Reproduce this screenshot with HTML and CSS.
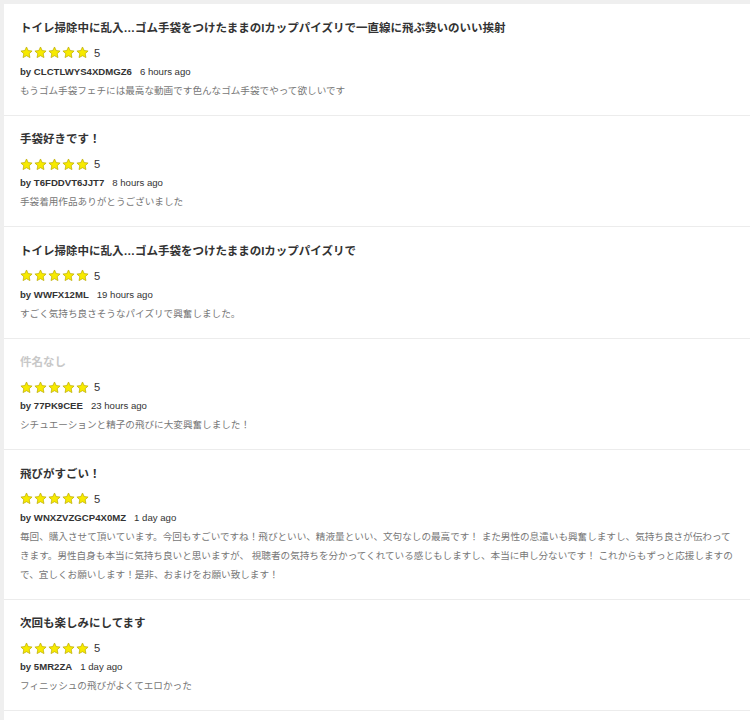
FILE: index.html
```html
<!DOCTYPE html>
<html lang="ja">
<head>
<meta charset="utf-8">
<link rel="stylesheet" href="styles.css">
</head>
<body>
<svg width="0" height="0" class="defs">
  <defs>
    <symbol id="star" viewBox="0 0 24 24">
      <path d="M12 1.8l3.1 6.6 7.2.9-5.3 5 1.4 7.1L12 17.9l-6.4 3.5 1.4-7.1-5.3-5 7.2-.9z" fill="#f7ea00" stroke="#b9a900" stroke-width="1.3" stroke-linejoin="round"/>
    </symbol>
  </defs>
</svg>
<div class="panel">
  <div class="review">
    <div class="title">トイレ掃除中に乱入…ゴム手袋をつけたままのIカップパイズリで一直線に飛ぶ勢いのいい挨射</div>
    <div class="rating"><span class="stars"><svg><use href="#star"/></svg><svg><use href="#star"/></svg><svg><use href="#star"/></svg><svg><use href="#star"/></svg><svg><use href="#star"/></svg></span><span class="score">5</span></div>
    <div class="meta"><span class="user">by CLCTLWYS4XDMGZ6</span><span class="time">6 hours ago</span></div>
    <div class="comment">もうゴム手袋フェチには最高な動画です色んなゴム手袋でやって欲しいです</div>
  </div>
  <div class="review">
    <div class="title">手袋好きです！</div>
    <div class="rating"><span class="stars"><svg><use href="#star"/></svg><svg><use href="#star"/></svg><svg><use href="#star"/></svg><svg><use href="#star"/></svg><svg><use href="#star"/></svg></span><span class="score">5</span></div>
    <div class="meta"><span class="user">by T6FDDVT6JJT7</span><span class="time">8 hours ago</span></div>
    <div class="comment">手袋着用作品ありがとうございました</div>
  </div>
  <div class="review">
    <div class="title">トイレ掃除中に乱入…ゴム手袋をつけたままのIカップパイズリで</div>
    <div class="rating"><span class="stars"><svg><use href="#star"/></svg><svg><use href="#star"/></svg><svg><use href="#star"/></svg><svg><use href="#star"/></svg><svg><use href="#star"/></svg></span><span class="score">5</span></div>
    <div class="meta"><span class="user">by WWFX12ML</span><span class="time">19 hours ago</span></div>
    <div class="comment">すごく気持ち良さそうなパイズリで興奮しました。</div>
  </div>
  <div class="review">
    <div class="title untitled">件名なし</div>
    <div class="rating"><span class="stars"><svg><use href="#star"/></svg><svg><use href="#star"/></svg><svg><use href="#star"/></svg><svg><use href="#star"/></svg><svg><use href="#star"/></svg></span><span class="score">5</span></div>
    <div class="meta"><span class="user">by 77PK9CEE</span><span class="time">23 hours ago</span></div>
    <div class="comment">シチュエーションと精子の飛びに大変興奮しました！</div>
  </div>
  <div class="review">
    <div class="title">飛びがすごい！</div>
    <div class="rating"><span class="stars"><svg><use href="#star"/></svg><svg><use href="#star"/></svg><svg><use href="#star"/></svg><svg><use href="#star"/></svg><svg><use href="#star"/></svg></span><span class="score">5</span></div>
    <div class="meta"><span class="user">by WNXZVZGCP4X0MZ</span><span class="time">1 day ago</span></div>
    <div class="comment">毎回、購入させて頂いています。今回もすごいですね！飛びといい、精液量といい、文句なしの最高です！ また男性の息遣いも興奮しますし、気持ち良さが伝わってきます。男性自身も本当に気持ち良いと思いますが、 視聴者の気持ちを分かってくれている感じもしますし、本当に申し分ないです！ これからもずっと応援しますので、宜しくお願いします！是非、おまけをお願い致します！</div>
  </div>
  <div class="review">
    <div class="title">次回も楽しみにしてます</div>
    <div class="rating"><span class="stars"><svg><use href="#star"/></svg><svg><use href="#star"/></svg><svg><use href="#star"/></svg><svg><use href="#star"/></svg><svg><use href="#star"/></svg></span><span class="score">5</span></div>
    <div class="meta"><span class="user">by 5MR2ZA</span><span class="time">1 day ago</span></div>
    <div class="comment">フィニッシュの飛びがよくてエロかった</div>
  </div>
</div>
</body>
</html>
```

FILE: styles.css
```css
html, body {
  margin: 0;
  padding: 0;
}
body {
  background: #efefef;
  font-family: "Liberation Sans", "Noto Sans CJK JP", sans-serif;
  color: #333;
  overflow: hidden;
}
.defs {
  position: absolute;
  width: 0;
  height: 0;
}
.panel {
  margin: 4px 0 0 4px;
  background: #fff;
  padding-bottom: 40px;
}
.review {
  padding: 15.5px 14px 15px 16px;
  border-bottom: 1px solid #ececec;
}
.title {
  font-size: 11.5px;
  line-height: 16px;
  font-weight: bold;
  color: #333;
}
.title.untitled {
  color: #c8c8c8;
}
.rating {
  display: flex;
  align-items: center;
  margin-top: 10px;
  height: 14px;
}
.stars {
  display: flex;
  gap: 1px;
}
.stars svg {
  width: 13px;
  height: 13px;
  display: block;
}
.score {
  font-size: 11.2px;
  margin-left: 5px;
  color: #333;
}
.meta {
  margin-top: 5px;
  font-size: 9.6px;
  line-height: 14px;
  color: #333;
}
.user {
  font-weight: bold;
  margin-right: 8px;
}
.comment {
  margin-top: 2px;
  font-size: 9.6px;
  line-height: 19px;
  color: #777;
}
```
